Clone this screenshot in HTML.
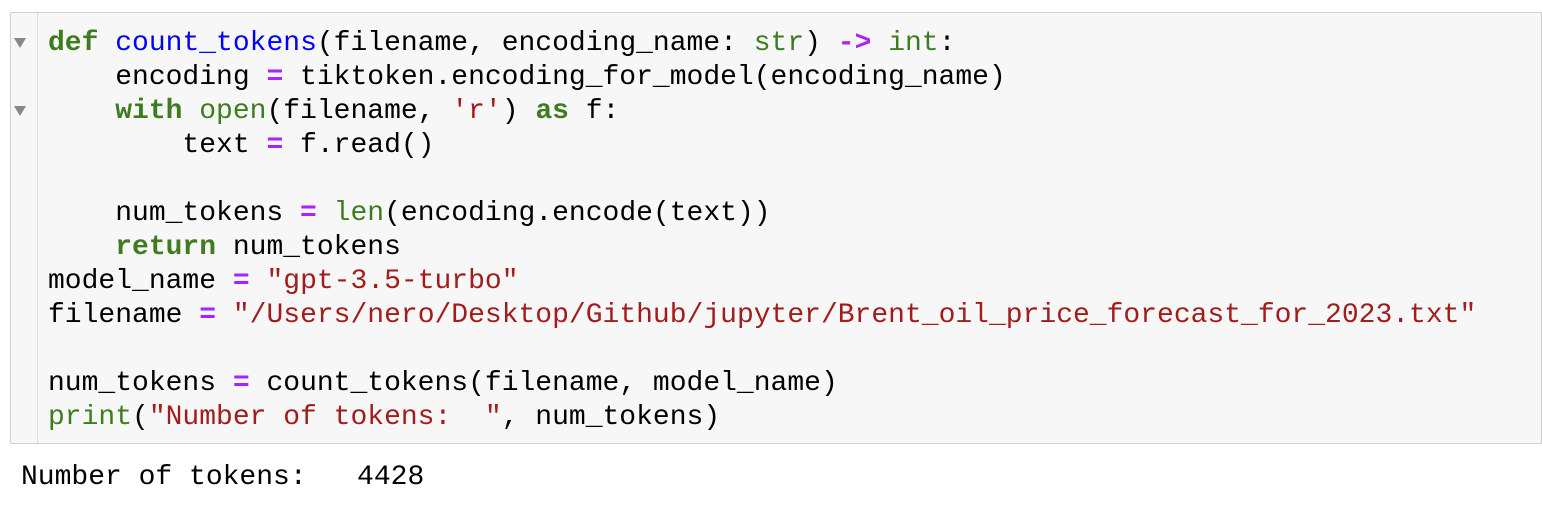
<!DOCTYPE html>
<html><head><style>
body{margin:0;width:1542px;height:506px;background:#fff;overflow:hidden;position:relative;font-family:"Liberation Mono",monospace;}
.cell{position:absolute;left:10px;top:12px;width:1530px;height:430px;background:#f7f7f7;border:1px solid #cfcfcf;border-radius:2px;}
.gut{position:absolute;left:26px;top:0;bottom:0;width:0;border-left:1px solid #ddd;}
pre{margin:0;position:absolute;left:37px;top:14px;font-size:28px;line-height:34px;font-family:"Liberation Mono",monospace;color:#000;}
.k{color:#3d7d1f;font-weight:bold}.f{color:#0000ff}.o{color:#aa22ff;font-weight:bold}.b{color:#3d7d1f}.s{color:#a31c1c}
.tri{position:absolute;left:3px;width:0;height:0;border-left:6px solid transparent;border-right:6px solid transparent;border-top:10px solid #888;}
.out{position:absolute;left:21px;top:461px;font-size:28px;line-height:34px;margin:0;}
</style></head><body>
<div class="cell"><div class="gut"></div>
<div class="tri" style="top:25px"></div><div class="tri" style="top:93px"></div>
<pre><span class="k">def</span> <span class="f">count_tokens</span>(filename, encoding_name: <span class="b">str</span>) <span class="o">-&gt;</span> <span class="b">int</span>:
    encoding <span class="o">=</span> tiktoken.encoding_for_model(encoding_name)
    <span class="k">with</span> <span class="b">open</span>(filename, <span class="s">'r'</span>) <span class="k">as</span> f:
        text <span class="o">=</span> f.read()

    num_tokens <span class="o">=</span> <span class="b">len</span>(encoding.encode(text))
    <span class="k">return</span> num_tokens
model_name <span class="o">=</span> <span class="s">"gpt-3.5-turbo"</span>
filename <span class="o">=</span> <span class="s">"/Users/nero/Desktop/Github/jupyter/Brent_oil_price_forecast_for_2023.txt"</span>

num_tokens <span class="o">=</span> count_tokens(filename, model_name)
<span class="b">print</span>(<span class="s">"Number of tokens:  "</span>, num_tokens)</pre>
</div>
<pre class="out">Number of tokens:   4428</pre>
</body></html>
